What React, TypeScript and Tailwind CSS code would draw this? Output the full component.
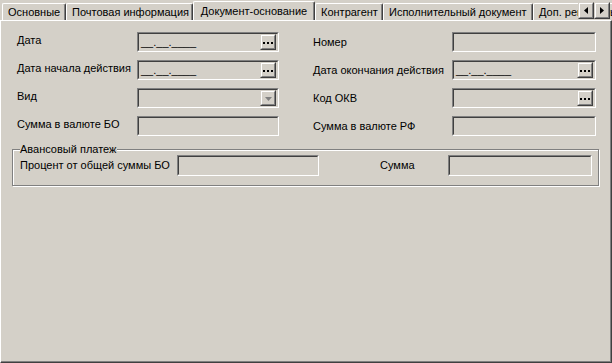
import React from 'react';

const tabs = [
  { label: 'Основные', w: 'w-[64px]' },
  { label: 'Почтовая информация', w: 'w-[127px]' },
  { label: 'Документ-основание', w: 'w-[122px]', active: true },
  { label: 'Контрагент', w: 'w-[68px]' },
  { label: 'Исполнительный документ', w: 'w-[150px]' },
  { label: 'Доп. реквизиты', w: 'w-[90px]' },
];

function Sunken({ w, h = 'h-[20px]', children }: { w: string; h?: string; children?: React.ReactNode }) {
  return (
    <div className={`${w} ${h} shrink-0 border-t border-l border-[#808080] border-r border-b border-r-white border-b-white`}>
      <div className="h-full w-full border-t border-l border-[#404040] border-r border-b border-r-[#d4d0c8] border-b-[#d4d0c8] bg-[#d4d0c8] flex items-center">
        {children}
      </div>
    </div>
  );
}

function Raised({ className = '', children }: { className?: string; children?: React.ReactNode }) {
  return (
    <div className={`border-t border-l border-[#d4d0c8] border-r border-b border-r-[#404040] border-b-[#404040] bg-[#d4d0c8] ${className}`}>
      <div className="h-full w-full border-t border-l border-white border-r border-b border-r-[#808080] border-b-[#808080] flex items-center justify-center">
        {children}
      </div>
    </div>
  );
}

function Dots() {
  return (
    <Raised className="w-[16px] h-[16px] ml-auto mr-px">
      <div className="flex gap-[2px] mt-[2px]">
        <span className="w-[2px] h-[2px] bg-black" />
        <span className="w-[2px] h-[2px] bg-black" />
        <span className="w-[2px] h-[2px] bg-black" />
      </div>
    </Raised>
  );
}

function DateText() {
  return <span className="pl-[2px] pt-[1px] text-black">__.__.____</span>;
}

function Row({ left, right, leftField, rightField }: { left: string; right: string; leftField: React.ReactNode; rightField: React.ReactNode }) {
  return (
    <div className="flex items-center h-[20px]">
      <span className="w-[120px] shrink-0 mb-[4px] whitespace-nowrap">{left}</span>
      {leftField}
      <span className="w-[34px] shrink-0" />
      <span className="w-[139px] shrink-0 whitespace-nowrap">{right}</span>
      {rightField}
    </div>
  );
}

export default function App() {
  return (
    <div
      className="w-[612px] h-[363px] bg-[#d4d0c8] text-black text-[11px] leading-[13px] flex flex-col overflow-hidden"
      style={{ fontFamily: '"Liberation Sans", Arial, sans-serif' }}
    >
      {/* Tab strip */}
      <div className="relative h-[20px] flex items-end pl-[2px] overflow-hidden shrink-0">
        {tabs.map((t) =>
          t.active ? (
            <div
              key={t.label}
              className={`${t.w} shrink-0 h-[20px] -mb-px relative z-10 bg-[#d4d0c8] border-t border-l border-white border-r border-r-[#404040] shadow-[inset_-1px_0_0_#808080] rounded-t-[2px] flex justify-center pt-[3px] whitespace-nowrap`}
            >
              {t.label}
            </div>
          ) : (
            <div
              key={t.label}
              className={`${t.w} shrink-0 h-[17px] border-t border-l border-white border-r border-r-[#404040] shadow-[inset_-1px_0_0_#808080] rounded-t-[2px] pt-[2px] pl-[5px] whitespace-nowrap overflow-hidden`}
            >
              {t.label}
            </div>
          )
        )}
        <div className="absolute right-[2px] top-[2px] flex z-20">
          <Raised className="w-[16px] h-[17px]">
            <svg width="4" height="7" viewBox="0 0 4 7"><path d="M4 0V7L0 3.5Z" fill="#000" /></svg>
          </Raised>
          <Raised className="w-[16px] h-[17px]">
            <svg width="4" height="7" viewBox="0 0 4 7"><path d="M0 0V7L4 3.5Z" fill="#000" /></svg>
          </Raised>
        </div>
      </div>

      {/* Page panel */}
      <div className="flex-1 border-t border-l border-white border-r border-b border-r-[#404040] border-b-[#404040] shadow-[inset_-1px_-1px_0_#808080]">
        <div className="pl-[16px] pt-[11px] flex flex-col gap-[8px]">
          <Row
            left="Дата"
            right="Номер"
            leftField={<Sunken w="w-[142px]"><DateText /><Dots /></Sunken>}
            rightField={<Sunken w="w-[144px]" />}
          />
          <Row
            left="Дата начала действия"
            right="Дата окончания действия"
            leftField={<Sunken w="w-[142px]"><DateText /><Dots /></Sunken>}
            rightField={<Sunken w="w-[144px]"><DateText /><Dots /></Sunken>}
          />
          <Row
            left="Вид"
            right="Код ОКВ"
            leftField={
              <Sunken w="w-[142px]">
                <Raised className="w-[16px] h-[16px] ml-auto mr-px">
                  <svg width="7" height="4" viewBox="0 0 7 4" className="mt-px"><path d="M0 0H7L3.5 4Z" fill="#808080" /></svg>
                </Raised>
              </Sunken>
            }
            rightField={<Sunken w="w-[144px]"><Dots /></Sunken>}
          />
          <Row
            left="Сумма в валюте БО"
            right="Сумма в валюте РФ"
            leftField={<Sunken w="w-[142px]" />}
            rightField={<Sunken w="w-[144px]" />}
          />
        </div>

        {/* Group box */}
        <div className="relative ml-[11px] mt-[13px] w-[587px] h-[37px] border border-[#808080] shadow-[1px_1px_0_#fff,inset_1px_1px_0_#fff]">
          <span className="absolute left-[7px] -top-[7px] bg-[#d4d0c8] pr-px">Авансовый платеж</span>
          <div className="flex items-center pl-[7px] pt-[5px]">
            <span className="w-[157px] shrink-0 whitespace-nowrap">Процент от общей суммы БО</span>
            <Sunken w="w-[142px]" h="h-[21px]" />
            <span className="w-[61px] shrink-0" />
            <span className="w-[68px] shrink-0">Сумма</span>
            <Sunken w="w-[144px]" h="h-[21px]" />
          </div>
        </div>
      </div>
    </div>
  );
}
